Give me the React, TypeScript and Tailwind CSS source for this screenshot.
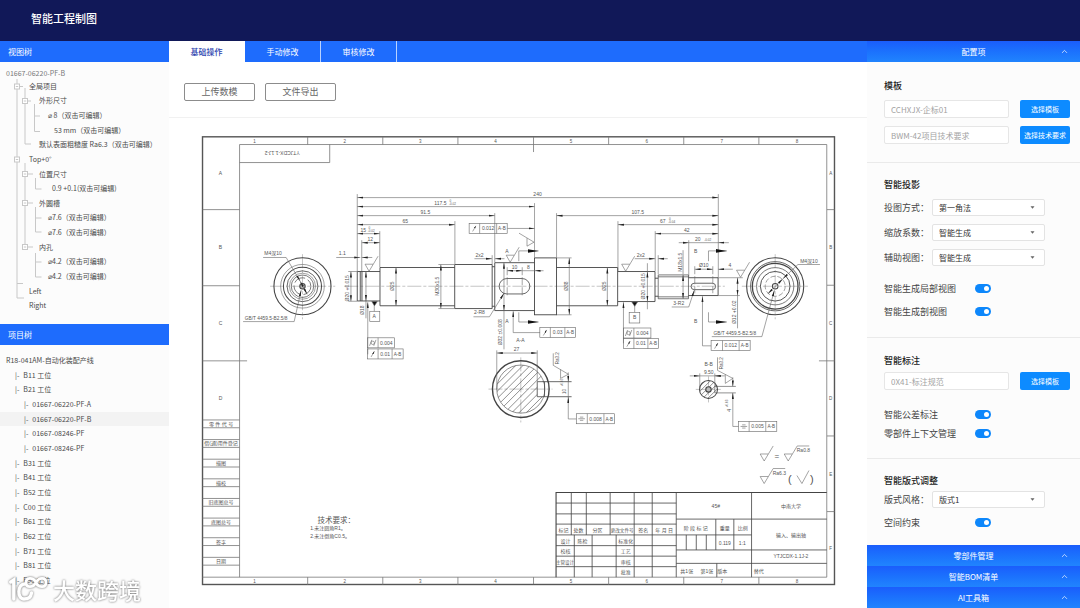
import React, { useState } from "react";
import { ChevronUp } from "lucide-react";

/* ---------- engineering drawing ---------- */

type TextItem = { x: number; y: number; t: string; s?: number; r?: number; a?: "start" | "middle" };

function Txt({ x, y, t, s = 5, r = 0, a = "middle" }: TextItem) {
  return (
    <text x={x} y={y} fontSize={s} textAnchor={a} transform={r ? `rotate(${r} ${x} ${y})` : undefined}>
      {t}
    </text>
  );
}

function Dim({ x1, y1, x2, y2 }: { x1: number; y1: number; x2: number; y2: number }) {
  return <line x1={x1} y1={y1} x2={x2} y2={y2} markerStart="url(#arrow)" markerEnd="url(#arrow)" />;
}

function Rough({ x, y, r = 0, bar = 0 }: { x: number; y: number; r?: number; bar?: number }) {
  const tail = bar ? `h${bar}` : "";
  return (
    <path
      transform={`translate(${x} ${y}) rotate(${r})`}
      d={`M4 -7 H-4 L0 0 L9 -15 ${tail}`}
    />
  );
}

function Frame({ x, y, kind, value, cells, datum }: { x: number; y: number; kind: "runout" | "cyl" | "sym"; value: string; cells: number[]; datum?: boolean }) {
  const total = cells.reduce((sum, c) => sum + c, 0);
  return (
    <g transform={`translate(${x} ${y})`}>
      <rect width={total} height={10} />
      <path d={`M${cells[0]} 0 v10 ${datum ? `M${cells[0] + cells[1]} 0 v10` : ""}`} />
      {kind === "runout" && <path d="M3.5 8 L6.8 2.4" markerEnd="url(#arrow-s)" />}
      {kind === "cyl" && (
        <>
          <circle cx={5.2} cy={5} r={1.7} />
          <path d="M2 8 L4.2 2 M6.2 8 L8.4 2" />
        </>
      )}
      {kind === "sym" && <path d="M2 5 H8.6 M3.6 3.4 H7 M3.6 6.6 H7" />}
      <Txt x={cells[0] + cells[1] / 2} y={6.8} t={value} />
      {datum && <Txt x={cells[0] + cells[1] + cells[2] / 2} y={6.8} t="A-B" s={4.6} />}
    </g>
  );
}

const zoneX = [254.5, 344.6, 420, 495, 570.5, 646, 721, 796];
const zoneTicks = [307.5, 382.5, 457.5, 608, 683, 758];
const rightZones: [string, number][] = [["A", 173], ["B", 247], ["C", 323], ["D", 398], ["E", 473], ["F", 547]];
const sideLabels = ["零 件 代 号", "借(通)用件登记", "描图", "描校", "旧底图总号", "底图总号", "签字", "日期"];

const notes: TextItem[] = [
  { x: 537, y: 196, t: "240" },
  { x: 440, y: 205, t: "117.5" },
  { x: 452, y: 205, t: "-0.02", s: 3 },
  { x: 450, y: 202, t: "0", s: 3 },
  { x: 425, y: 214, t: "91.5" },
  { x: 637, y: 214, t: "107.5" },
  { x: 405, y: 223, t: "65" },
  { x: 662, y: 223, t: "67" },
  { x: 671, y: 223, t: "-0.04", s: 3 },
  { x: 669, y: 220, t: "0", s: 3 },
  { x: 363, y: 232, t: "15" },
  { x: 371, y: 232, t: "-0.02", s: 3 },
  { x: 369, y: 229, t: "0", s: 3 },
  { x: 686, y: 232, t: "42" },
  { x: 370, y: 241, t: "12" },
  { x: 697, y: 241, t: "20" },
  { x: 707, y: 241, t: "-0.02", s: 3 },
  { x: 342, y: 255, t: "1.1" },
  { x: 273, y: 255, t: "M4深10" },
  { x: 808, y: 263, t: "M4深10" },
  { x: 266, y: 319.5, t: "GB/T 4459.5-B2.5/8", s: 4.8 },
  { x: 734, y: 334.5, t: "GB/T 4459.5-B2.5/8", s: 4.8 },
  { x: 349, y: 288, t: "Ø20 +0.015", r: -90 },
  { x: 364, y: 310, t: "Ø18", r: -90 },
  { x: 394, y: 286, t: "Ø25", r: -90 },
  { x: 439, y: 286, t: "M30x1.5", r: -90 },
  { x: 502, y: 332, t: "Ø32 ±0.008", r: -90 },
  { x: 567, y: 286, t: "Ø38", r: -90 },
  { x: 605, y: 286, t: "Ø25", r: -90 },
  { x: 644, y: 286, t: "Ø20 +0.015", r: -90 },
  { x: 681, y: 262, t: "M18x1.5", r: -90 },
  { x: 735, y: 312, t: "Ø12 +0.02", r: -90 },
  { x: 479, y: 257, t: "2x2" },
  { x: 640, y: 257, t: "2x2" },
  { x: 514, y: 269, t: "10" },
  { x: 528, y: 269, t: "8" },
  { x: 703, y: 267, t: "Ø10" },
  { x: 729, y: 267, t: "4" },
  { x: 479, y: 314, t: "2-R8" },
  { x: 678, y: 305, t: "3-R2" },
  { x: 506.5, y: 253, t: "A" },
  { x: 506.5, y: 323, t: "A" },
  { x: 695, y: 253, t: "B" },
  { x: 695, y: 323, t: "B" },
  { x: 520, y: 342, t: "A-A" },
  { x: 516, y: 351, t: "27" },
  { x: 558, y: 358, t: "Ra3.2", r: -90, s: 4.5 },
  { x: 565, y: 391, t: "10", r: -90, s: 4.5 },
  { x: 562, y: 382, t: "+0.05", r: -90, s: 3 },
  { x: 708, y: 366, t: "B-B" },
  { x: 708, y: 374, t: "9.50" },
  { x: 722, y: 363, t: "Ra3.2", r: -90, s: 4.5 },
  { x: 730, y: 410, t: "4", r: -90 },
  { x: 727, y: 403, t: "+0.03", r: -90, s: 3 },
  { x: 374, y: 318, t: "A" },
  { x: 634, y: 319, t: "B" },
  { x: 802.5, y: 452, t: "Ra0.8" },
  { x: 778.5, y: 474, t: "Ra6.3" },
  { x: 776, y: 459, t: "=", s: 8 },
  { x: 789, y: 482, t: "(", s: 11 },
  { x: 811, y: 482, t: ")", s: 11 },
  { x: 336, y: 522, t: "技术要求：", s: 7.5 },
  { x: 310, y: 529.5, t: "1.未注圆角R1。", a: "start" },
  { x: 310, y: 537.5, t: "2.未注倒角C0.5。", a: "start" },
  { x: 563, y: 531, t: "标记" },
  { x: 578, y: 531, t: "处数" },
  { x: 597, y: 531, t: "分区" },
  { x: 621.5, y: 531, t: "更改文件号", s: 4.6 },
  { x: 642.5, y: 531, t: "签名" },
  { x: 663.5, y: 531, t: "年 月 日" },
  { x: 565, y: 542, t: "设计" },
  { x: 582, y: 542, t: "陈检" },
  { x: 625, y: 542, t: "标准化" },
  { x: 565, y: 552.5, t: "校核" },
  { x: 625, y: 552.5, t: "工艺" },
  { x: 564.5, y: 563, t: "主管设计", s: 4.5 },
  { x: 625, y: 563, t: "审核" },
  { x: 625, y: 573, t: "批准" },
  { x: 715, y: 507, t: "45#" },
  { x: 790, y: 507, t: "中南大学" },
  { x: 695, y: 529, t: "阶 段 标 记" },
  { x: 724, y: 529, t: "重量" },
  { x: 742, y: 529, t: "比例" },
  { x: 724, y: 544, t: "0.119" },
  { x: 741.5, y: 544, t: "1:1" },
  { x: 790, y: 536, t: "输入、输出轴" },
  { x: 790, y: 557, t: "YTJCDX-1.1J-2" },
  { x: 686, y: 572, t: "共1张" },
  { x: 706, y: 572, t: "第1张" },
  { x: 721.5, y: 572, t: "版本" },
  { x: 758, y: 572, t: "替代" },
  { x: 282, y: 151, t: "YTJCDX-1.1J-2", r: 180 },
];

function Drawing() {
  return (
    <svg
      viewBox="195 130 645 460"
      className="block w-full font-['Liberation_Sans','Noto_Sans_CJK_SC',sans-serif]"
      role="img"
      aria-label="输入、输出轴工程图"
    >
      <defs>
        <marker id="arrow" viewBox="0 0 12 4" refX="12" refY="2" markerWidth="6" markerHeight="2.4" markerUnits="userSpaceOnUse" orient="auto-start-reverse">
          <path d="M0 0 L12 2 L0 4 Z" fill="#222" />
        </marker>
        <marker id="arrow-s" viewBox="0 0 12 6" refX="12" refY="3" markerWidth="3" markerHeight="2" markerUnits="userSpaceOnUse" orient="auto">
          <path d="M0 0 L12 3 L0 6 Z" fill="#222" />
        </marker>
        <marker id="arrow-l" viewBox="0 0 12 4" refX="12" refY="2" markerWidth="11" markerHeight="4" markerUnits="userSpaceOnUse" orient="auto">
          <path d="M0 0 L12 2 L0 4 Z" fill="#111" />
        </marker>
      </defs>
      <clipPath id="section-a">
        <path d="M536.7 371.2 A24 24 0 1 0 536.7 406.2 Z" />
        <path d="M536.7 371.2 A24 24 0 0 1 543.1 381.3 H536.7 Z M536.7 406.2 A24 24 0 0 0 543.1 396.3 H536.7 Z" />
      </clipPath>
      <clipPath id="section-b">
        <circle cx="707.7" cy="389" r="9" />
      </clipPath>

      {/* sheet border and zones */}
      <g fill="none" stroke="#777" strokeWidth="0.8">
        <rect x="202.5" y="136.8" width="631" height="447" stroke="#555" strokeWidth="1.4" />
        <path d="M239.5 576.5 V144.5 H825.8 V576.5 H202.5" />
        <path d="M239.5 162.5 H329.5 V144.5" />
        {zoneTicks.map((x) => (
          <path key={x} d={`M${x} 137 v7.5 M${x} 576.5 v7.5`} />
        ))}
        <path d="M533 137 v15 M533 576.5 v7" />
        <path d="M202.5 209.5 h37 M202.5 285.5 h37 M202.5 360.5 h44.5" />
        <path d="M826 209.5 h7.5 M826 285 h7.5 M818 360.5 h15.5 M826 435.5 h7.5 M826 511 h7.5" />
        {sideLabels.map((l, i) => (
          <path key={l} d={`M202.5 ${419.5 + i * 19.6} h37 m0 7.8 h-37`} />
        ))}
      </g>
      <g fill="#777">
        {zoneX.map((x, i) => (
          <React.Fragment key={x}>
            <Txt x={x} y={142.5} t={String(i + 1)} s={4.5} />
            <Txt x={x} y={582} t={String(i + 1)} s={4.5} />
          </React.Fragment>
        ))}
        {rightZones.map(([l, y]) => (
          <Txt key={l} x={829.7} y={y + 2} t={l} s={4.5} />
        ))}
        {rightZones.slice(0, 4).map(([l, y]) => (
          <Txt key={l} x={220.5} y={y + 2} t={l} s={5} />
        ))}
      </g>
      <g fill="#555">
        {sideLabels.map((l, i) => (
          <Txt key={l} x={221} y={425.3 + i * 19.6} t={l} />
        ))}
      </g>

      {/* title block */}
      <g fill="none" stroke="#444" strokeWidth="0.8">
        <path d="M555.5 576.5 V492 H825.8" strokeWidth="1.1" />
        <path d="M555.5 502.5 H675.5 M555.5 513.3 H675.5 M555.5 523.5 H675.5 M555.5 534.3 H675.5 M555.5 545 H675.5 M555.5 555.5 H675.5 M555.5 566 H675.5" />
        <path d="M570.7 492 V534.3 M585.7 492 V534.3 M609.5 492 V534.3 M573.7 534.3 V576.5 M591.5 534.3 V576.5 M615.5 534.3 V576.5 M633.5 492 V576.5 M651.5 492 V576.5 M675.5 492 V576.5 M750.7 492 V576.5" />
        <path d="M675.5 518.5 H825.8 M675.5 534.3 H750.7 M675.5 549.3 H825.8 M675.5 562.7 H825.8" />
        <path d="M715 518.5 V549.3 M733 518.5 V549.3 M685.5 534.3 V549.3 M695.5 534.3 V549.3 M705.5 534.3 V549.3 M716 562.7 V576.5" />
      </g>

      {/* centre lines */}
      <g stroke="#888" strokeWidth="0.5" fill="none" strokeDasharray="14 2 3 2">
        <path d="M344 286 H724" />
        <path d="M270 286 H335 M302.3 254 V319 M741 286 H807 M774.3 254 V319" />
        <path d="M488 388.7 H552 M520.3 357 V422 M695 389 H720 M707.7 376 V402" />
      </g>

      {/* shaft outline */}
      <g fill="none" stroke="#444" strokeWidth="0.9">
        <path d="M357 271.3 H379.7 M357 300.7 H379.7 M357 271.3 V300.7 M360 271.3 V300.7 M361.7 271.3 V300.7" />
        <path d="M454.3 267.3 H379.7 V305.5 H454.3" />
        <path d="M454.3 264.3 H491.7 V308.3 H454.3 Z M491.7 266.5 H494.3 M491.7 306 H494.3" />
        <path d="M534 262.5 H494.3 V310.3 H534" />
        <rect x="534" y="257.7" width="22" height="56.8" />
        <path d="M556 267.3 H617 V305.5 H556" />
        <path d="M617.3 271.3 H654.3 V301.3 H617.3 M654.3 278 H657.5 M654.3 296 H657.5" />
        <path d="M657.5 274.7 H687.7 V298.5 H657.5 Z M657.5 276.6 H687.7 M657.5 296.6 H687.7" strokeWidth="0.7" />
        <path d="M687.7 277.5 H717.3 V295.3 H687.7" />
        <rect x="498.7" y="278.3" width="30.6" height="15.4" rx="7.7" strokeWidth="0.8" />
        <rect x="690.3" y="283" width="24.5" height="6.4" rx="3.2" strokeWidth="0.8" />
      </g>

      {/* end views */}
      <g fill="none" stroke="#444">
        <circle cx="302.3" cy="286" r="28.5" strokeWidth="1.1" />
        <circle cx="302.3" cy="286" r="21.8" strokeWidth="0.5" />
        <circle cx="302.3" cy="286" r="19" strokeWidth="1" />
        <circle cx="302.3" cy="286" r="15.4" strokeWidth="0.8" />
        <circle cx="302.3" cy="286" r="13" strokeWidth="0.5" />
        <circle cx="302.3" cy="286" r="11.2" strokeWidth="0.7" />
        <circle cx="302.3" cy="286" r="8.4" strokeWidth="0.7" strokeDasharray="12 3" />
        <circle cx="302.3" cy="286" r="2.7" fill="#aaa" strokeWidth="1" />
        <circle cx="774.3" cy="286" r="28.5" strokeWidth="1.1" />
        <circle cx="774.3" cy="286" r="24.6" strokeWidth="0.8" />
        <circle cx="774.3" cy="286" r="22.8" strokeWidth="1.3" />
        <circle cx="774.3" cy="286" r="18.6" strokeWidth="0.7" />
        <circle cx="774.3" cy="286" r="14.8" strokeWidth="0.9" />
        <circle cx="774.3" cy="286" r="10" strokeWidth="0.5" strokeDasharray="5 2" />
        <circle cx="774.3" cy="286" r="2.8" strokeWidth="1" />
      </g>

      {/* sections */}
      <g fill="none" stroke="#444" strokeWidth="0.8">
        <g clipPath="url(#section-a)" strokeWidth="0.6">
          {[0, 1, 2, 3, 4, 5, 6, 7, 8, 9, 10, 11, 12].map((i) => (
            <path key={i} d={`M${450 + i * 7.2} 416 l56 -56`} />
          ))}
        </g>
        <g clipPath="url(#section-b)" strokeWidth="0.6">
          {[0, 1, 2, 3, 4, 5].map((i) => (
            <path key={i} d={`M${685 + i * 5} 400 l22 -22`} />
          ))}
        </g>
        <circle cx="520.3" cy="388.7" r="28.3" strokeWidth="1.4" />
        <circle cx="520.3" cy="388.7" r="24" strokeWidth="0.6" />
        <path d="M571 381.3 H536.7 V396.3 H571 M544 381.3 V396.3" />
        <circle cx="707.7" cy="389" r="9" strokeWidth="1" />
        <circle cx="707.7" cy="389" r="2.7" strokeWidth="1.1" fill="#bbb" />
        <path d="M735 386 H714 V392.5 H735" strokeWidth="0.6" />
      </g>

      {/* dimensions and leaders */}
      <g fill="none" stroke="#666" strokeWidth="0.6">
        <Dim x1={357} y1={197.5} x2={717.5} y2={197.5} />
        <Dim x1={357} y1={206.5} x2={534} y2={206.5} />
        <Dim x1={357} y1={215.5} x2={494.3} y2={215.5} />
        <Dim x1={556} y1={215.5} x2={717.5} y2={215.5} />
        <Dim x1={357} y1={224.5} x2={454.5} y2={224.5} />
        <Dim x1={617.3} y1={224.5} x2={717.5} y2={224.5} />
        <Dim x1={357} y1={233.5} x2={379.5} y2={233.5} />
        <Dim x1={654.5} y1={233.5} x2={717.5} y2={233.5} />
        <Dim x1={361.5} y1={242.5} x2={379.5} y2={242.5} />
        <path d="M678 242.5 H688" markerEnd="url(#arrow)" />
        <path d="M728 242.5 H717.5" markerEnd="url(#arrow)" />
        <path d="M688 242.5 H717.5" />
        <path d="M336 257.3 H360" markerEnd="url(#arrow)" />
        <path d="M372 257.3 H361.5" markerEnd="url(#arrow)" />
        <path d="M357 194 V271 M361.5 240 V271 M379.5 231 V267 M454.5 221 V264 M494.3 213 V262 M534 203 V257 M556 213 V257 M617.3 221 V271 M654.5 231 V271 M688 240 V277 M717.5 194 V277 M657.5 255 V274 M491.7 255 V264" />
        <Dim x1={350.7} y1={271.3} x2={350.7} y2={301} />
        <path d="M348 271.3 H357 M348 301 H357" />
        <Dim x1={365.7} y1={271.3} x2={365.7} y2={300.7} />
        <path d="M365.7 300 V318" />
        <Dim x1={395.7} y1={267.3} x2={395.7} y2={305.5} />
        <Dim x1={440.5} y1={264.3} x2={440.5} y2={308.3} />
        <path d="M438 264.3 H454 M438 308.3 H454" />
        <Dim x1={503.5} y1={262.5} x2={503.5} y2={310.3} />
        <path d="M503.5 310 V349" />
        <Dim x1={568.7} y1={257.7} x2={568.7} y2={314.5} />
        <path d="M556 257.7 H571 M556 314.5 H571" />
        <Dim x1={606.7} y1={267.3} x2={606.7} y2={305.5} />
        <Dim x1={646.7} y1={271.3} x2={646.7} y2={301.3} />
        <Dim x1={682.3} y1={274.7} x2={682.3} y2={298.5} />
        <path d="M682.3 274 V250 M646.7 301 V309 M646.7 271 V263" />
        <Dim x1={736.7} y1={277.5} x2={736.7} y2={295.3} />
        <path d="M717 277.5 H742 M717 295.3 H739 M736.7 295 V328" />
        <path d="M474 258.5 H491.5" markerEnd="url(#arrow)" />
        <path d="M504 258.5 H494.5" markerEnd="url(#arrow)" />
        <path d="M634 258.5 H654.5" markerEnd="url(#arrow)" />
        <path d="M667 258.5 H657.5" markerEnd="url(#arrow)" />
        <Dim x1={506.7} y1={270.5} x2={521.7} y2={270.5} />
        <path d="M521.7 270.5 H534 M543 270.5 H534" markerEnd="url(#arrow)" />
        <path d="M506.7 267 V297 M521.7 267 V297" strokeDasharray="8 2" />
        <Dim x1={694} y1={269} x2={712} y2={269} />
        <path d="M732 269 H717.5" markerEnd="url(#arrow)" />
        <path d="M694 266 V293 M712 266 V293" strokeDasharray="8 2" />
        <path d="M473 316.5 H489 L503.5 293" markerEnd="url(#arrow)" />
        <path d="M671 306.7 H688 L693.5 290" markerEnd="url(#arrow)" />
        <path d="M263 257.3 H286 L300 281" markerEnd="url(#arrow)" />
        <path d="M300 281 L307 294" markerStart="url(#arrow)" markerEnd="url(#arrow)" />
        <path d="M243 321.3 H294 L301 290" markerEnd="url(#arrow)" />
        <path d="M819 264.3 H797 L782 278.5" markerEnd="url(#arrow)" />
        <Dim x1={767} y1={293.5} x2={782} y2={278.5} />
        <path d="M711 336.3 H761 L773.5 290" markerEnd="url(#arrow)" />

        <path d="M507 228.3 H534" markerEnd="url(#arrow)" />
        <path d="M539.5 332.3 H512.7 V311" markerEnd="url(#arrow)" />
        <path d="M367.5 354 V302" markerEnd="url(#arrow)" />
        <path d="M622.8 343 V302" markerEnd="url(#arrow)" />
        <path d="M710.3 345.5 H701.7 V296" markerEnd="url(#arrow)" />
        <path d="M575.7 418.5 H567.7 V396.5" markerEnd="url(#arrow)" />
        <path d="M567.7 372 V381.3" markerEnd="url(#arrow)" />
        <path d="M567.7 381 V397" />
        <path d="M737.7 426 H732 V392.5" markerEnd="url(#arrow)" />
        <path d="M732 377 V386" markerEnd="url(#arrow)" />
        <Dim x1={496.3} y1={352.7} x2={536.7} y2={352.7} />
        <path d="M496.3 350 V389 M536.7 350 V381" />
        <path d="M689 375.5 H699" markerEnd="url(#arrow)" />
        <path d="M724 375.5 H714" markerEnd="url(#arrow)" />
        <path d="M699 375.5 H714 M699 373 V389 M714 373 V386" />

        <path d="M518.3 261 V250.7 H538" markerEnd="url(#arrow-l)" />
        <path d="M518.3 312 V321.7 H538" markerEnd="url(#arrow-l)" />
        <path d="M707.7 261 V250.7 H726" markerEnd="url(#arrow-l)" />
        <path d="M707.7 312 V321.7 H726" markerEnd="url(#arrow-l)" />

        <Rough x={368.8} y={271} />
        <Rough x={509.7} y={262} />
        <Rough x={625} y={271} />
        <Rough x={739.7} y={277} />
        <Rough x={533.5} y={242} r={-90} />
        <path d="M552.7 353 V365 L568 374 M560 369 V378 L567.5 374" />
        <path d="M716.7 357 V370 L732 378 M724.5 374 V383 L732 378" />
        <Rough x={763.3} y={460.5} />
        <Rough x={787.3} y={460.5} bar={12} />
        <Rough x={763.3} y={483} bar={12} />
        <path d="M796 475 L801 483 L808 470" />

        <rect x="369.5" y="311" width="10" height="10.4" />
        <path d="M374 311 V303" />
        <path d="M371.5 301.3 H377 L374.2 305.5 Z" fill="#111" />
        <rect x="628.5" y="312.3" width="10.6" height="10.4" />
        <path d="M634 312 V303" />
        <path d="M631.2 301.8 H636.8 L634 306 Z" fill="#111" />

        <Frame x={468.7} y={223.3} kind="runout" value="0.012" cells={[10.5, 17, 10.5]} datum />
        <Frame x={539.3} y={327.2} kind="runout" value="0.03" cells={[10.5, 14.5, 10.5]} datum />
        <Frame x={367.3} y={337.5} kind="cyl" value="0.004" cells={[10.5, 16.5]} />
        <Frame x={367.3} y={348.6} kind="runout" value="0.01" cells={[10.5, 14, 11]} datum />
        <Frame x={622.7} y={327.7} kind="cyl" value="0.004" cells={[10.5, 17]} />
        <Frame x={622.7} y={338.3} kind="runout" value="0.01" cells={[10.5, 14, 10.5]} datum />
        <Frame x={710.3} y={340.3} kind="runout" value="0.012" cells={[11.4, 16.6, 11]} datum />
        <Frame x={575.7} y={413.3} kind="sym" value="0.008" cells={[11, 16.6, 10.7]} datum />
        <Frame x={737.7} y={421} kind="sym" value="0.005" cells={[10.6, 16.6, 11]} datum />
      </g>

      <g fill="#555">
        {notes.map((n) => (
          <Txt key={`${n.t}-${n.x}-${n.y}`} {...n} />
        ))}
      </g>
      <style>{`svg g text { stroke: none; fill: #555; }`}</style>
    </svg>
  );
}

/* ---------- left column ---------- */

const viewTree: [string, string][] = [
  ["全局项目", "pl-[29px]"],
  ["外形尺寸", "pl-[39px]"],
  ["⌀ 8（双击可编辑）", "pl-[48px]"],
  ["53 mm（双击可编辑）", "pl-[54px]"],
  ["默认表面粗糙度 Ra6.3（双击可编辑）", "pl-[39px]"],
  ["Top+0°", "pl-[29px]"],
  ["位置尺寸", "pl-[39px]"],
  ["0.9 +0.1(双击可编辑)", "pl-[52px]"],
  ["外圆槽", "pl-[39px]"],
  ["⌀7.6（双击可编辑）", "pl-[48px]"],
  ["⌀7.6（双击可编辑）", "pl-[48px]"],
  ["内孔", "pl-[39px]"],
  ["⌀4.2（双击可编辑）", "pl-[48px]"],
  ["⌀4.2（双击可编辑）", "pl-[48px]"],
  ["Left", "pl-[29px]"],
  ["Right", "pl-[29px]"],
];

const projectTree: [string, number][] = [
  ["R18-041AM-自动化装配产线", 0],
  ["B11 工位", 1],
  ["B21 工位", 1],
  ["01667-06220-PF-A", 2],
  ["01667-06220-PF-B", 2],
  ["01667-08246-PF", 2],
  ["01667-08246-PF", 2],
  ["B31 工位", 1],
  ["B41 工位", 1],
  ["B52 工位", 1],
  ["C00 工位", 1],
  ["B61 工位", 1],
  ["B62 工位", 1],
  ["B71 工位", 1],
  ["B81 工位", 1],
  ["F90 工位", 1],
];
const indents = ["pl-[6px]", "pl-[15px]", "pl-[24px]"];

function TreeLines() {
  return (
    <svg aria-hidden="true" viewBox="0 0 60 234" className="pointer-events-none absolute top-0 left-0 h-full w-[60px]" fill="none" stroke="#c8c8c8">
      <path d="M17 0 V219 H24 M17 7.5 H23 M17 204.5 H23 M25 9 V65 H31 M25 22 H31 M34.5 25 V52.5 H40 M34.5 37 H40" />
      <path d="M25 84 V168 M25 95 H33 M25 124 H33 M25 168 H33 M35.5 99 V110 H41.5 M35.5 128 V153 H41.5 M35.5 139 H41.5 M35.5 174 V198 H41.5 M35.5 183 H41.5" />
      {[[17, 7.5], [25, 22], [17, 80.5], [25, 95], [25, 124], [25, 168]].map(([x, y]) => (
        <g key={`${x}-${y}`}>
          <rect x={x - 2.5} y={y - 2.5} width="5" height="5" fill="#fff" />
          <path d={`M${x - 1.2} ${y} h2.4`} />
        </g>
      ))}
    </svg>
  );
}

function LeftPanel() {
  const [active, setActive] = useState(4);
  return (
    <aside className="w-[169px] shrink-0 bg-[#fcfcfc] text-[7px] leading-[13px] text-[#4a4a4a]">
      <h2 className="flex h-[21px] items-center bg-[#1e6cfd] pl-[8px] text-[8px] text-white">视图树</h2>
      <div className="pt-[6px] pl-[6px] leading-[11px] text-[#777]">01667-06220-PF-B</div>
      <div className="relative">
        <TreeLines />
        <ul className="grid h-[234px] auto-rows-fr">
          {viewTree.map(([label, pad], i) => (
            <li key={i} className={`flex items-center whitespace-nowrap ${pad}`}>{label}</li>
          ))}
        </ul>
      </div>
      <h2 className="mt-[11px] flex h-[21px] items-center bg-[#1e6cfd] pl-[8px] text-[8px] text-white">项目树</h2>
      <ul className="mt-[8px] grid h-[235px] auto-rows-fr">
        {projectTree.map(([label, level], i) => (
          <li key={i} className={i === active ? "flex bg-[#f3f3f3]" : "flex"}>
            <button type="button" onClick={() => setActive(i)} className={`flex w-full items-center gap-[4px] text-left whitespace-nowrap ${indents[level]}`}>
              {level > 0 && <span>|-</span>}
              <span>{label}</span>
            </button>
          </li>
        ))}
      </ul>
    </aside>
  );
}

/* ---------- right column ---------- */

function Toggle({ label }: { label: string }) {
  return (
    <label className="flex h-[15px] items-center">
      <span className="w-[91px]">{label}</span>
      <input
        type="checkbox"
        role="switch"
        defaultChecked
        className="relative h-[9px] w-[16px] appearance-none rounded-full bg-[#b8bfc9] before:absolute before:top-[2px] before:left-[2px] before:size-[5px] before:rounded-full before:bg-white checked:bg-[#0d87fb] checked:before:left-[9px]"
      />
    </label>
  );
}

function SelectRow({ label, value }: { label: string; value: string }) {
  return (
    <label className="flex items-center">
      <span className="w-[48px]">{label}：</span>
      <span className="relative flex">
        <select defaultValue={value} className="h-[17px] w-[113px] appearance-none rounded-[2px] border border-[#e3e3e3] bg-white pl-[6px] text-[8px] leading-[15px] text-[#333]">
          <option>{value}</option>
        </select>
        <svg aria-hidden="true" viewBox="0 0 6 4" className="pointer-events-none absolute top-[7px] right-[10px] h-[3px] w-[5px]">
          <path d="M0.3 0.3 H5.7 L3 3.6 Z" fill="#666" />
        </svg>
      </span>
    </label>
  );
}

function PickRow({ value, action }: { value: string; action: string }) {
  return (
    <div className="flex gap-[11px]">
      <input aria-label={action} placeholder={value} className="h-[18px] w-0 flex-1 rounded-[2px] border border-[#e6e6e6] bg-white px-[6px] text-[8px] text-[#555] placeholder:text-[#a3a3a3]" />
      <button type="button" className="h-[18px] w-[50px] rounded-[2px] bg-[#0d8bff] text-[7px] whitespace-nowrap text-white">{action}</button>
    </div>
  );
}

function PanelBar({ label }: { label: string }) {
  return (
    <button type="button" className="relative flex h-[21px] w-full items-center justify-center bg-linear-to-b from-[#1b5dfc] to-[#2184fe] text-[8px] text-white">
      {label}
      <ChevronUp className="absolute right-[11px] size-[9px]" strokeWidth={1.8} />
    </button>
  );
}

const heading = "text-[9px] font-medium leading-[15px] text-[#222]";

function RightPanel() {
  return (
    <aside className="flex w-[213px] shrink-0 flex-col bg-[#fcfcfc] text-[9px] leading-[15px] text-[#444]">
      <PanelBar label="配置项" />
      <section className="border-b border-[#eaeaea] pt-[16px] pr-[10px] pb-[18px] pl-[17px]">
        <h3 className={heading}>模板</h3>
        <div className="mt-[7px] flex flex-col gap-[8px]">
          <PickRow value="CCHXJX-企标01" action="选择模板" />
          <PickRow value="BWM-42项目技术要求" action="选择技术要求" />
        </div>
      </section>
      <section className="border-b border-[#eaeaea] pt-[14px] pb-[18px] pl-[17px]">
        <h3 className={heading}>智能投影</h3>
        <div className="mt-[7px] flex flex-col gap-[8px]">
          <SelectRow label="投图方式" value="第一角法" />
          <SelectRow label="缩放系数" value="智能生成" />
          <SelectRow label="辅助视图" value="智能生成" />
        </div>
        <div className="mt-[15px] flex flex-col gap-[8px]">
          <Toggle label="智能生成局部视图" />
          <Toggle label="智能生成剖视图" />
        </div>
      </section>
      <section className="border-b border-[#eaeaea] pt-[15px] pr-[10px] pb-[17px] pl-[17px]">
        <h3 className={heading}>智能标注</h3>
        <div className="mt-[4px]">
          <PickRow value="0X41-标注规范" action="选择模板" />
        </div>
        <div className="mt-[17px] flex flex-col gap-[4px]">
          <Toggle label="智能公差标注" />
          <Toggle label="零部件上下文管理" />
        </div>
      </section>
      <section className="pt-[14px] pb-[12px] pl-[17px]">
        <h3 className={heading}>智能版式调整</h3>
        <div className="mt-[3px] flex flex-col gap-[7px]">
          <SelectRow label="版式风格" value="版式1" />
          <Toggle label="空间约束" />
        </div>
      </section>
      <div className="mt-auto">
        <PanelBar label="零部件管理" />
        <PanelBar label="智能BOM清单" />
        <PanelBar label="AI工具箱" />
      </div>
    </aside>
  );
}

/* ---------- page ---------- */

const tabs = ["基础操作", "手动修改", "审核修改"];

export default function App() {
  const [tab, setTab] = useState(0);
  return (
    <div className="relative flex min-h-screen flex-col overflow-hidden bg-white font-['Noto_Sans_CJK_SC','Noto_Sans',sans-serif]">
      <header className="flex h-[41px] items-center bg-[#111858] pb-[5px] pl-[31px]">
        <h1 className="text-[11px] font-medium text-white">智能工程制图</h1>
      </header>
      <div className="flex flex-1">
        <LeftPanel />
        <main className="min-w-0 flex-1">
          <nav className="flex h-[21px] bg-[#1e6cfd] text-[8px]">
            {tabs.map((t, i) => (
              <button
                key={t}
                type="button"
                onClick={() => setTab(i)}
                className={`w-[76px] border-r ${i === tab ? "border-white bg-white font-medium text-[#2b3fae]" : "border-[#b9d2ff] text-white"}`}
              >
                {t}
              </button>
            ))}
          </nav>
          <div className="flex gap-[10px] border-b border-[#f1f1f1] px-[15px] pt-[21px] pb-[16px] text-[9px] text-[#666]">
            <button type="button" className="h-[18px] w-[71px] rounded-[2px] border border-[#8c8c8c] bg-white">上传数模</button>
            <button type="button" className="h-[18px] w-[71px] rounded-[2px] border border-[#8c8c8c] bg-white">文件导出</button>
          </div>
          <div className="px-[26px] pt-[12px]">
            <Drawing />
          </div>
        </main>
        <RightPanel />
      </div>

      <div className="pointer-events-none absolute bottom-[5px] left-[9px] flex items-center gap-[4px] text-[22px] leading-[28px] font-medium text-white drop-shadow-[0_0_1px_#666]">
        <svg aria-hidden="true" viewBox="0 0 40 28" className="h-[28px] w-[40px]" fill="none" stroke="#fff" strokeWidth="3.4" strokeLinecap="round">
          <path d="M1.8 7 L4.8 5 V24" />
          <path d="M16 9 C8 9 8 24 15 24 C19 24 22 22 22.500 18" />
          <path d="M27 7 C24 2 17 2 17 7.500 C17 13 24 13 27 7.500 C30 2 37 2 37 7.500 C37 13 30 13 27 8" strokeWidth="2.800" />
        </svg>
        <span>大数跨境</span>
      </div>
    </div>
  );
}
